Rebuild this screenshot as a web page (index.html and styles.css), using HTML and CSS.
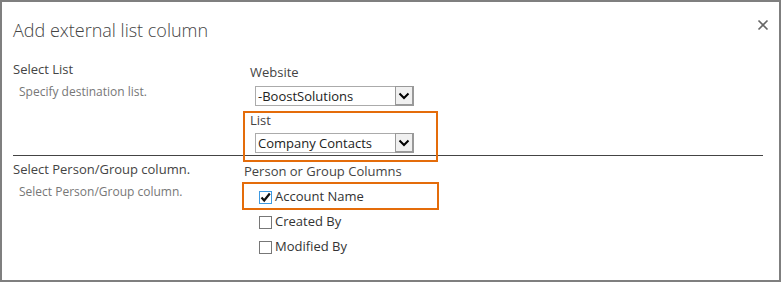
FILE: index.html
```html
<!DOCTYPE html>
<html lang="en">
<head>
    <meta charset="UTF-8">
    <meta name="viewport" content="width=device-width, initial-scale=1.0">
    <title>Add external list column</title>
    <link rel="stylesheet" href="styles.css">
</head>
<body>
    <div class="dialog">
        <div class="dialog-header">
            <h1>Add external list column</h1>
            <span class="close" title="Close">
                <svg width="12" height="12" viewBox="0 0 12 12"><path d="M1.5 1.5 L10.5 10.5 M10.5 1.5 L1.5 10.5" stroke="#666" stroke-width="1.6"/></svg>
            </span>
        </div>

        <div class="section first">
            <div class="section-info">
                <div class="section-title">Select List</div>
                <div class="section-desc">Specify destination list.</div>
            </div>
            <div class="section-body">
                <div class="field">
                    <div class="field-label">Website</div>
                    <div class="select">
                        <span class="select-value">-BoostSolutions</span>
                        <span class="select-btn"><svg width="12" height="8" viewBox="0 0 12 8"><path d="M1.5 1.5 L6 6 L10.5 1.5" fill="none" stroke="#000" stroke-width="2"/></svg></span>
                    </div>
                </div>
                <div class="field marked">
                    <div class="field-label">List</div>
                    <div class="select">
                        <span class="select-value">Company Contacts</span>
                        <span class="select-btn"><svg width="12" height="8" viewBox="0 0 12 8"><path d="M1.5 1.5 L6 6 L10.5 1.5" fill="none" stroke="#000" stroke-width="2"/></svg></span>
                    </div>
                </div>
            </div>
        </div>

        <div class="divider"></div>

        <div class="section second">
            <div class="section-info">
                <div class="section-title">Select Person/Group column.</div>
                <div class="section-desc">Select Person/Group column.</div>
            </div>
            <div class="section-body">
                <div class="group-label">Person or Group Columns</div>
                <div class="options">
                    <label class="option marked">
                        <span class="box checked"><svg width="11" height="11" viewBox="0 0 11 11"><path d="M1.5 5.5 L4.2 8.5 L9.8 1.5" fill="none" stroke="#111" stroke-width="2.2"/></svg></span>
                        <span>Account Name</span>
                    </label>
                    <label class="option">
                        <span class="box"></span>
                        <span>Created By</span>
                    </label>
                    <label class="option">
                        <span class="box"></span>
                        <span>Modified By</span>
                    </label>
                </div>
            </div>
        </div>
    </div>
</body>
</html>
```

FILE: styles.css
```css
body {
    margin: 0;
    font-family: "Open Sans", "Noto Sans", sans-serif;
    font-size: 13px;
    line-height: 16px;
    color: #444;
    background: white;
}
.dialog {
    position: relative;
    box-sizing: border-box;
    width: 781px;
    height: 282px;
    border: 2px solid #7f7f7f;
    padding: 16px 16px 0 11px;
    background: white;
}
.dialog-header {
    display: flex;
    justify-content: space-between;
    align-items: flex-start;
}
h1 {
    margin: 0;
    font-size: 18px;
    line-height: 24px;
    font-weight: 300;
    color: #444;
}
.close {
    display: flex;
    margin: 1px -6px 0 0;
}
.section {
    display: grid;
    grid-template-columns: 230px 1fr;
}
.section.first {
    margin-top: 19px;
    padding-bottom: 2px;
}
.section.second {
    margin-top: 5px;
}
.divider {
    border-top: 1px solid #444;
}
.section-desc {
    margin-top: 7px;
    padding-left: 6px;
    font-size: 12px;
    color: #777;
}
.section.first .section-body {
    padding-top: 3px;
}
.section.second .section-body {
    padding-top: 2px;
}
.field {
    position: relative;
}
.field + .field {
    margin-top: 6px;
}
.field-label {
    padding-left: 7px;
}
.select {
    display: flex;
    box-sizing: border-box;
    width: 159px;
    height: 20px;
    margin: 6px 0 0 12px;
    border: 1px solid #ababab;
    background: white;
}
.field.marked .select {
    margin-top: 5px;
}
.select-value {
    flex: 1;
    padding-left: 2px;
    line-height: 18px;
    color: #222;
}
.select-btn {
    display: flex;
    align-items: center;
    justify-content: center;
    box-sizing: border-box;
    width: 19px;
    height: 20px;
    margin: -1px -1px 0 0;
    border: 1px solid #999;
    border-right-width: 2px;
    border-bottom-width: 2px;
    background: #f0f0f0;
}
.marked::after {
    content: "";
    position: absolute;
    box-sizing: border-box;
    border: 2px solid #e46c0a;
    pointer-events: none;
}
.field.marked::after {
    left: 0;
    top: -1px;
    width: 195px;
    height: 51px;
}
.group-label {
    padding-left: 1px;
}
.options {
    margin-top: 4px;
}
.option {
    position: relative;
    display: flex;
    align-items: center;
    height: 25px;
    padding-left: 16px;
    color: #333;
}
.option.marked::after {
    left: -1px;
    top: -1px;
    width: 197px;
    height: 28px;
}
.box {
    display: flex;
    align-items: center;
    justify-content: center;
    box-sizing: border-box;
    width: 13px;
    height: 13px;
    margin: 4px 3px 0 0;
    border: 1px solid #777;
    background: white;
}
.box.checked {
    border-color: #3d9ae2;
}
```
